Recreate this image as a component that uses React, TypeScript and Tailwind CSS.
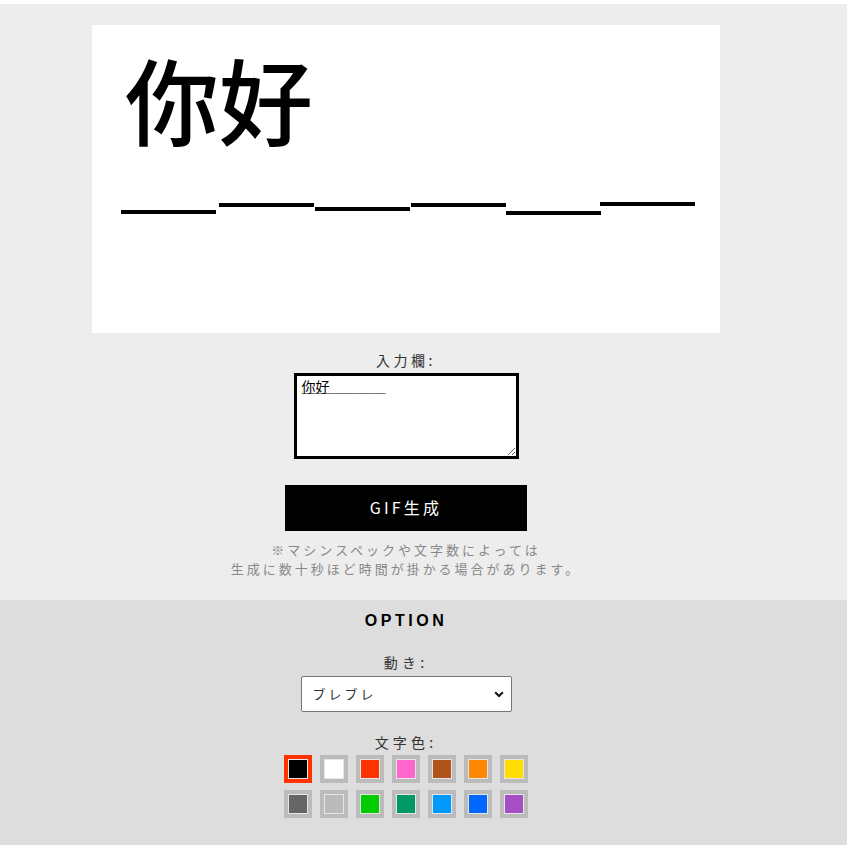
import { useState } from 'react';

const colors = [
  '#000000', '#ffffff', '#ff3300', '#ff66cc', '#b0521a', '#ff8800', '#ffdd00',
  '#666666', '#bbbbbb', '#00cc00', '#009966', '#0099ff', '#0066ff', '#a64fc4',
];

const segs = [
  { x: 29, y: 185 },
  { x: 127, y: 178 },
  { x: 223, y: 182 },
  { x: 319, y: 178 },
  { x: 414, y: 186 },
  { x: 508, y: 177 },
];

const jp = { fontFamily: '"Noto Sans CJK JP", "Noto Sans", sans-serif' };

const App = () => {
  const [text, setText] = useState('你好\n＿＿＿＿＿＿');
  const [color, setColor] = useState(0);

  return (
    <div className="min-h-screen bg-[#dddddd]" style={jp}>
      <div className="h-[4px] bg-white" />
      <section className="bg-[#ededed] h-[596px] pt-[21px]">
        <div className="w-[812px] flex flex-col items-center">
          {/* preview canvas */}
          <div className="relative w-[628px] h-[308px] bg-white">
            <div
              className="absolute left-[33px] top-[26px] text-[94px] leading-none font-medium text-black"
              style={{ fontFamily: '"Noto Sans CJK SC", sans-serif' }}
            >
              你好
            </div>
            <svg className="absolute left-0 top-0" width="628" height="308">
              {segs.map((s, i) => (
                <rect key={i} x={s.x} y={s.y} width="95" height="4" fill="#000" />
              ))}
            </svg>
          </div>

          <label className="mt-[17px] text-[14px] leading-[20px] tracking-[0.25em] text-[#333]">入力欄:</label>
          <textarea
            value={text}
            onChange={(e) => setText(e.target.value)}
            className="mt-[3px] w-[225px] h-[86px] border-[3px] border-black bg-white pl-[5px] pt-[10px] text-[14px] leading-[0px] text-black outline-none"
            style={jp}
          />

          <button className="mt-[26px] w-[242px] h-[46px] bg-black pb-[3px] text-white text-[16px] leading-[40px] tracking-[0.2em]">
            GIF生成
          </button>

          <p className="mt-[9px] text-center text-[13px] leading-[19px] tracking-[0.23em] text-[#888]">
            ※マシンスペックや文字数によっては
            <br />
            生成に数十秒ほど時間が掛かる場合があります。
          </p>
        </div>
      </section>

      <section className="pt-[11px] pb-[27px]">
        <div className="w-[812px] flex flex-col items-center">
          <h2
            className="text-[16px] leading-[20px] font-bold tracking-[0.22em] text-black"
            style={{ fontFamily: '"Liberation Sans", Arial, sans-serif' }}
          >
            OPTION
          </h2>

          <label className="mt-[21px] text-[14px] leading-[20px] tracking-[0.3em] text-[#333]">動き:</label>
          <div className="relative mt-[4px]">
            <select
              className="appearance-none w-[211px] h-[36px] bg-white border border-[#767676] rounded-[2px] pl-[11px] text-[13px] tracking-[3px] text-[#333] outline-none"
              style={jp}
              defaultValue="bure"
            >
              <option value="bure">ブレブレ</option>
              <option value="yure">ユラユラ</option>
              <option value="pika">ピカピカ</option>
            </select>
            <svg
              className="absolute right-[8px] top-[15px] pointer-events-none"
              width="10"
              height="7"
              viewBox="0 0 10 7"
            >
              <path d="M1.2 1.2L5 5l3.8-3.8" fill="none" stroke="#111" strokeWidth="2" />
            </svg>
          </div>

          <label className="mt-[20px] text-[14px] leading-[20px] tracking-[0.3em] text-[#333]">文字色:</label>
          <div className="mt-[3px] grid grid-cols-7 gap-x-[8px] gap-y-[7px]">
            {colors.map((c, i) => (
              <button
                key={c}
                onClick={() => setColor(i)}
                className={
                  color === i
                    ? 'w-[28px] h-[28px] border-4 border-[#ff3300] bg-[#e6e6e6] p-px'
                    : 'w-[28px] h-[28px] border-4 border-[#bbbbbb] bg-[#e6e6e6] p-px'
                }
              >
                <span className="block w-[18px] h-[18px]" style={{ backgroundColor: c }} />
              </button>
            ))}
          </div>
        </div>
      </section>
    </div>
  );
};

export default App;
